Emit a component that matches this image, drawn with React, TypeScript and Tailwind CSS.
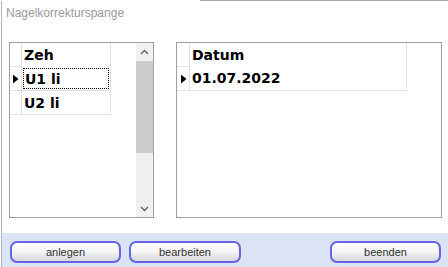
const gridFont = { fontFamily: '"DejaVu Sans", Verdana, sans-serif' }

function Pointer() {
  return (
    <svg width="6" height="10" viewBox="0 0 6 10" className="block ml-px">
      <polygon points="0,0.5 5.5,5 0,9.5" fill="#000" />
    </svg>
  )
}

function Chevron({ up }: { up?: boolean }) {
  return (
    <svg width="9" height="6" viewBox="0 0 9 6" className="block">
      <polyline
        points={up ? "1,5 4.5,1.5 8,5" : "1,1 4.5,4.5 8,1"}
        fill="none"
        stroke="#606060"
        strokeWidth="1.4"
      />
    </svg>
  )
}

function Button({ label, w }: { label: string; w: string }) {
  return (
    <button
      className={`${w} h-[22px] rounded-[7px] border-2 border-[#6464e4] bg-gradient-to-b from-white via-[#f4f4f4] to-[#d6d6d6] text-[11px] text-[#303030] leading-none`}
      style={{ fontFamily: '"Liberation Sans", Tahoma, sans-serif' }}
    >
      {label}
    </button>
  )
}

export default function App() {
  return (
    <div className="w-[448px] h-[267px] bg-white flex flex-col overflow-hidden">
      <div className="h-px ml-[200px] bg-[#a8a8a8] shrink-0" />
      <div className="flex-1 flex flex-col border-l border-[#b4b4b4] ml-px">
        <div
          className="pl-[4px] pt-[4px] h-[41px] text-[12px] leading-[16px] text-[#9a9a9a]"
          style={{ fontFamily: '"Liberation Sans", "Segoe UI", sans-serif' }}
        >
          Nagelkorrekturspange
        </div>
        <div className="flex pl-[7px] gap-[22px]" style={gridFont}>
          {/* left grid */}
          <div className="w-[145px] h-[176px] border border-[#a0a0a0] flex">
            <div className="flex-1">
              <div className="flex h-[24px]">
                <div className="w-[12px] border-r border-b border-[#e3e3e3]" />
                <div className="w-[89px] border-r border-[#e3e3e3] pl-[2px] text-[14px] font-bold leading-[24px] text-black">
                  Zeh
                </div>
              </div>
              <div className="flex h-[24px]">
                <div className="w-[12px] border-r border-b border-[#e3e3e3] flex items-center justify-center">
                  <Pointer />
                </div>
                <div className="w-[89px] border-r border-b border-[#e3e3e3] p-px">
                  <div className="h-full border border-dotted border-black pl-px text-[14px] font-bold leading-[20px] text-black">
                    U1 li
                  </div>
                </div>
              </div>
              <div className="flex h-[24px]">
                <div className="w-[12px] border-r border-b border-[#e3e3e3]" />
                <div className="w-[89px] border-r border-b border-[#e3e3e3] pl-[2px] text-[14px] font-bold leading-[24px] text-black">
                  U2 li
                </div>
              </div>
            </div>
            <div className="w-[17px] bg-[#f0f0f0] flex flex-col">
              <div className="h-[18px] flex items-center justify-center">
                <Chevron up />
              </div>
              <div className="h-[92px] bg-[#cdcdcd]" />
              <div className="flex-1" />
              <div className="h-[17px] flex items-center justify-center">
                <Chevron />
              </div>
            </div>
          </div>
          {/* right grid */}
          <div className="w-[266px] h-[176px] border border-[#a0a0a0]">
            <div className="flex h-[24px]">
              <div className="w-[13px] border-r border-b border-[#e3e3e3]" />
              <div className="w-[217px] border-r border-[#e3e3e3] pl-[2px] text-[14px] font-bold leading-[24px] text-black">
                Datum
              </div>
            </div>
            <div className="flex h-[24px]">
              <div className="w-[13px] border-r border-b border-[#e3e3e3] flex items-center justify-center">
                <Pointer />
              </div>
              <div className="w-[217px] border-r border-b border-[#e3e3e3] pl-[2px] text-[14px] font-bold leading-[23px] text-black">
                01.07.2022
              </div>
            </div>
          </div>
        </div>
        <div className="flex-1" />
        <div className="h-[34px] bg-[#dbe3f7] flex items-start pt-[8px] pl-[8px] pr-[7px]">
          <Button label="anlegen" w="w-[111px]" />
          <div className="w-[8px]" />
          <Button label="bearbeiten" w="w-[112px]" />
          <div className="flex-1" />
          <Button label="beenden" w="w-[111px]" />
        </div>
      </div>
    </div>
  )
}
